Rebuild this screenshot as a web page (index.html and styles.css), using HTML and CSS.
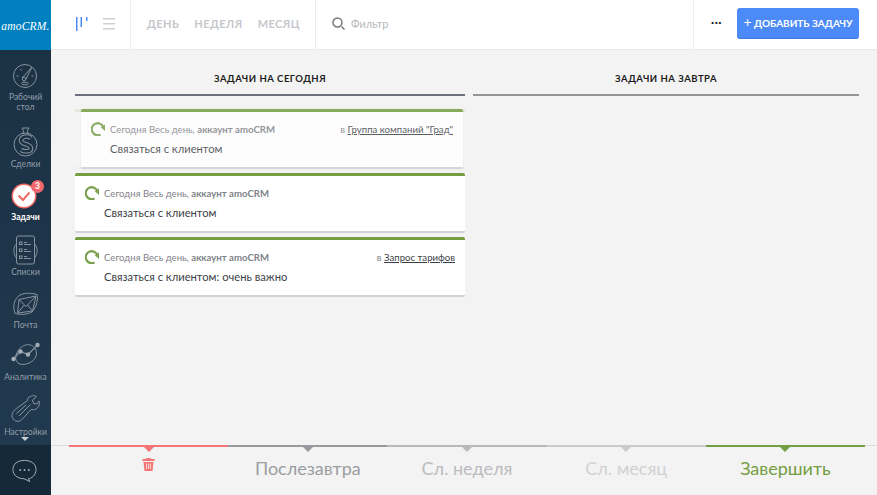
FILE: index.html
```html
<!DOCTYPE html>
<html lang="ru">
<head>
<meta charset="utf-8">
<title>Задачи</title>
<link rel="stylesheet" href="styles.css">
</head>
<body>
<div class="app">
  <aside class="sidebar">
    <div class="logo">amoCRM.</div>
    <nav class="nav">
      <a class="nav-item tight">
        <svg class="nav-icon" viewBox="0 0 30 30"><circle cx="14" cy="15" r="11.500"/><path d="M11 17 21 6 14.500 19M9.500 8l1 1.500M5.500 15h2M20.500 15h2"/><circle cx="13" cy="18" r="1.800"/><ellipse cx="14" cy="22.500" rx="3.500" ry="1.300"/></svg>
        <span>Рабочий<br>стол</span>
      </a>
      <a class="nav-item">
        <svg class="nav-icon" viewBox="0 0 30 30"><path d="M12 6.500 12.500 3.500 11 1h7l-1.500 2.500.5 3"/><circle cx="14.500" cy="17.500" r="11.500"/><path class="s-outer" d="M20 11c-3-2.500-10-1.500-10 2.500 0 4.500 10 3 10 8 0 3.500-6.500 3.500-10 1.500"/><path class="s-inner" d="M20 11c-3-2.500-10-1.500-10 2.500 0 4.500 10 3 10 8 0 3.500-6.500 3.500-10 1.500"/></svg>
        <span>Сделки</span>
      </a>
      <a class="nav-item active">
        <span class="check"><svg viewBox="0 0 22 22"><path d="M5.500 10.500 10 15l6.500-7.500"/></svg></span>
        <span class="badge">3</span>
        <span>Задачи</span>
      </a>
      <a class="nav-item">
        <svg class="nav-icon" viewBox="0 0 30 30"><rect x="5.500" y="1" width="18" height="28" rx="2"/><path d="M5.500 9C2 12 2 19 5.500 23M23.500 9c3.500 3 3.500 10 0 14M13 7.500h3M13 9.500h7M13 14.500h3M13 16.500h7M13 21.500h3M13 23.500h7"/><rect x="8.500" y="7" width="2.500" height="2.500"/><rect x="8.500" y="14" width="2.500" height="2.500"/><rect x="8.500" y="21" width="2.500" height="2.500"/></svg>
        <span>Списки</span>
      </a>
      <a class="nav-item tight">
        <svg class="nav-icon" viewBox="0 0 30 30"><path d="M4.500 25C1 18 3 10 9 6c5-2.500 12-2 17-.5 1.500 6-1 13-5 17.500-5 2.500-11 3-16.500 1.500Z"/><path d="M8 10.500 25 7 21.500 22 6.500 24ZM8 10.500l7 7L25 7M6.500 24l7-8M21.500 22l-5-6"/></svg>
        <span>Почта</span>
      </a>
      <a class="nav-item loose">
        <svg class="nav-icon" viewBox="0 0 30 30"><path d="M9 9.500C15 3 25 5 25.500 14 26 22 15 27 9 25 3 23 3.500 15 9 9.500Z"/><path class="thick" d="M2 20 9.500 12.500 17 15.500 26.500 6"/><circle class="dot" cx="2.500" cy="20" r="2.200"/><circle class="dot" cx="9.500" cy="12.500" r="2.200"/><circle class="dot" cx="17" cy="15.500" r="2.200"/><circle class="dot" cx="26.500" cy="6" r="2.200"/></svg>
        <span>Аналитика</span>
      </a>
      <a class="nav-item loose">
        <svg class="nav-icon" viewBox="0 0 30 30"><path d="M17 4c3-2.500 6-3 8.500-1.500L21.500 6l1 3.500 3.500.5 2-3c1.500 3.500-1 7.500-4 8.500-1.500.5-3 0-4 0l-9 10c-4 4-10 1-10-4 0-3 2-5 4.500-7l11-8c0-1 0-2 1-3Z"/><path d="M8 22 19.500 10.500M5.500 19.500 15 11"/></svg>
        <span>Настройки</span>
      </a>
    </nav>
    <div class="more-arrow"></div>
    <div class="chat">
      <svg viewBox="0 0 26 24"><path d="M13 1c7 0 12 3.500 12 9.500S20 20 17 20l1.500 3-6-3C6 20 1 16.500 1 10.500S6 1 13 1Z"/><circle class="fill" cx="8.500" cy="11" r="1"/><circle class="fill" cx="13" cy="11" r="1"/><circle class="fill" cx="17.500" cy="11" r="1"/></svg>
    </div>
  </aside>

  <div class="content">
    <header class="topbar">
      <div class="views">
        <svg class="view-board" viewBox="0 0 12 14"><rect x="0" y="0" width="1.500" height="14"/><rect x="4.500" y="0" width="1.500" height="10"/><rect x="10" y="0" width="1.500" height="4"/></svg>
        <svg class="view-list" viewBox="0 0 12 12"><rect y="0" width="12" height="1.500"/><rect y="5" width="12" height="1.500"/><rect y="10" width="12" height="1.500"/></svg>
      </div>
      <div class="tabs">
        <span>ДЕНЬ</span><span>НЕДЕЛЯ</span><span>МЕСЯЦ</span>
      </div>
      <div class="filter">
        <svg viewBox="0 0 13 13"><circle cx="5.500" cy="5.500" r="4.500"/><path d="m9.500 9.500 3 3"/></svg>
        <span>Фильтр</span>
      </div>
      <div class="actions">
        <span class="dots">···</span>
        <button class="add-btn"><span class="plus">+</span> ДОБАВИТЬ ЗАДАЧУ</button>
      </div>
    </header>

    <main class="board">
      <section class="column today">
        <h2>ЗАДАЧИ НА СЕГОДНЯ</h2>
        <div class="cards">
          <div class="slot">
            <article class="card ghost">
              <div class="meta"><svg class="spin" viewBox="0 0 14 14"><path d="M9.500 12.500A6 6 0 1 1 12.300 5"/><path class="tip" d="M9.800 5.200 14 2.500V9Z"/></svg></div>
            </article>
            <article class="card dragged">
              <div class="meta"><svg class="spin" viewBox="0 0 14 14"><path d="M9.500 12.500A6 6 0 1 1 12.300 5"/><path class="tip" d="M9.800 5.200 14 2.500V9Z"/></svg><span class="when">Сегодня Весь день, <b>аккаунт amoCRM</b></span><span class="rel">в <u>Группа компаний "Град"</u></span></div>
              <p class="title">Связаться с клиентом</p>
            </article>
          </div>
          <article class="card">
            <div class="meta"><svg class="spin" viewBox="0 0 14 14"><path d="M9.500 12.500A6 6 0 1 1 12.300 5"/><path class="tip" d="M9.800 5.200 14 2.500V9Z"/></svg><span class="when">Сегодня Весь день, <b>аккаунт amoCRM</b></span></div>
            <p class="title">Связаться с клиентом</p>
          </article>
          <article class="card">
            <div class="meta"><svg class="spin" viewBox="0 0 14 14"><path d="M9.500 12.500A6 6 0 1 1 12.300 5"/><path class="tip" d="M9.800 5.200 14 2.500V9Z"/></svg><span class="when">Сегодня Весь день, <b>аккаунт amoCRM</b></span><span class="rel">в <u>Запрос тарифов</u></span></div>
            <p class="title">Связаться с клиентом: очень важно</p>
          </article>
        </div>
      </section>
      <section class="column tomorrow">
        <h2>ЗАДАЧИ НА ЗАВТРА</h2>
      </section>
    </main>

    <footer class="dropbar">
      <div class="drop red"><svg viewBox="0 0 12 13"><path d="M4 0h4l.5 1H12v2H0V1h3.500ZM1 4h10l-1 9H2Z"/><path class="gap" d="M4 5.500v5.500M6 5.500v5.500M8 5.500v5.500"/></svg></div>
      <div class="drop d1">Послезавтра</div>
      <div class="drop d2">Сл. неделя</div>
      <div class="drop d3">Сл. месяц</div>
      <div class="drop green">Завершить</div>
    </footer>
  </div>
</div>
</body>
</html>
```

FILE: styles.css
```css
* { box-sizing: border-box; }
html, body { margin: 0; height: 100%; }
body { font-family: "Lato", "Roboto", sans-serif; background: #f3f3f3; overflow: hidden; }
.app { display: flex; width: 877px; height: 495px; }

/* sidebar */
.sidebar { width: 51px; flex: none; display: flex; flex-direction: column; background: #1b3144; color: #929ea8; position: relative; }
.logo { height: 50px; background: #0080bf; color: #fff; display: flex; align-items: center; justify-content: center; padding-top: 1px; font: italic 11.500px "Liberation Serif", serif; letter-spacing: .2px; white-space: nowrap; }
.nav { height: 395px; padding-top: 11px; display: grid; grid-template-rows: 66px 54px 54px 54px 50px 55px 50px; background: linear-gradient(#1b3144, #21394e); }
.nav-item { position: relative; display: flex; flex-direction: column; align-items: center; font-size: 8.500px; line-height: 10px; text-align: center; white-space: nowrap; }
.nav-item > span { display: block; }
.nav-icon { width: 30px; height: 30px; flex: none; fill: none; stroke: #87949f; stroke-width: 1; margin-bottom: 2px; }
.tight .nav-icon { margin-bottom: 1px; }
.loose .nav-icon { margin-bottom: 3px; }
.nav-icon .thick { stroke-width: 1.300; }
.nav-icon .dot { fill: #a4aeb6; stroke: none; }
.nav-icon .s-outer { stroke-width: 4.500; }
.nav-icon .s-inner { stroke: #1b3144; stroke-width: 2.500; }
.nav-item.active { color: #fff; font-weight: 700; }
.check { width: 22px; height: 22px; margin: 4px 3px 5px 0; border-radius: 50%; background: #fff; box-shadow: 0 0 0 1.500px #ef6a62; }
.check svg { display: block; width: 22px; height: 22px; fill: none; stroke: #ef6a62; stroke-width: 2; }
.badge { position: absolute; top: -1px; left: 31px; width: 13px; height: 13px; border-radius: 50%; background: #f3686c; color: #fff; font-size: 8.500px; line-height: 13px; }
.more-arrow { position: absolute; left: 21px; top: 437px; border: 4px solid transparent; border-top-color: #c9ced3; border-bottom: 0; }
.chat { flex: 1; background: #152938; display: flex; justify-content: center; padding: 14px 2px 0 0; }
.chat svg { width: 25px; height: 24px; fill: none; stroke: #a8b1b9; stroke-width: 1; }
.chat .fill { fill: #a8b1b9; stroke: none; }

/* content */
.content { flex: 1; min-width: 0; display: flex; flex-direction: column; }
.topbar { height: 50px; flex: none; background: #fff; border-bottom: 1px solid #e9e9e9; display: flex; }
.views { width: 80px; border-right: 1px solid #ededed; display: flex; align-items: center; padding: 0 0 1px 25px; gap: 15px; }
.view-board { width: 12px; height: 14px; fill: #4c8bf7; }
.view-list { width: 12px; height: 12px; fill: #cfcfcf; }
.tabs { width: 185px; border-right: 1px solid #ededed; display: flex; align-items: center; gap: 15px; padding: 0 0 2px 16px; font-size: 11px; font-weight: 700; letter-spacing: .45px; color: #c5c8cd; }
.filter { flex: 1; display: flex; align-items: center; gap: 6px; padding: 0 0 2px 16px; font-size: 11px; color: #b9b9b9; }
.filter svg { width: 13px; height: 13px; fill: none; stroke: #777; stroke-width: 1.500; }
.actions { width: 184px; border-left: 1px solid #ededed; display: flex; align-items: center; padding: 0 0 3px 16px; gap: 15px; }
.dots { width: 12px; font: 700 14px/12px "Roboto", sans-serif; color: #222; text-align: center; letter-spacing: -.5px; }
.add-btn { width: 122px; height: 31px; border: 0; border-bottom: 1px solid #3f78dc; border-radius: 3px; padding: 0; background: #4c8bf7; color: #fff; font: 700 10px "Lato", sans-serif; white-space: nowrap; }
.plus { font-size: 14px; font-weight: 400; line-height: 10px; }

/* board */
.board { flex: 1; min-height: 0; display: flex; padding: 0 18px 0 24px; gap: 8px; }
.column { flex: none; }
.today { width: 390px; }
.tomorrow { width: 386px; }
.column h2 { margin: 0; height: 46px; padding-top: 22px; font-size: 9.500px; line-height: 14px; font-weight: 700; letter-spacing: .5px; text-align: center; color: #1c1c1c; border-bottom: 2px solid #6d707e; }
.tomorrow h2 { border-bottom-color: #939598; }
.cards { padding-top: 13px; display: flex; flex-direction: column; gap: 4px; }
.slot { position: relative; height: 60px; }
.card { height: 60px; background: #fff; border-top: 3px solid #749e42; border-bottom: 2px solid #cfd1d6; border-radius: 2px; padding: 10px 10px 0 10px; }
.card.ghost { opacity: .12; }
.card.dragged { position: absolute; left: 6px; top: 0; width: 382px; opacity: .82; box-shadow: 0 0 2px rgba(0,0,0,.08); }
.meta { display: flex; align-items: center; height: 14px; font-size: 9.600px; color: #7f8389; white-space: nowrap; }
.spin { width: 14px; height: 14px; margin-right: 5px; flex: none; fill: none; stroke: #7a9f4d; stroke-width: 2.200; }
.spin .tip { fill: #7a9f4d; stroke: none; }
.when b { font-weight: 700; }
.rel { margin-left: auto; }
.rel u { color: #3c3f46; text-underline-offset: 1px; }
.title { margin: 5px 0 0 19px; font-size: 11.200px; line-height: 16px; color: #3c3f46; }

/* drop bar */
.dropbar { height: 50px; flex: none; display: flex; padding: 0 12px 0 18px; background: linear-gradient(#dcdcdc 1px, transparent 1px) 0 -.5px no-repeat; }
.drop { position: relative; flex: 1; height: 50px; border-top: 2px solid; padding-top: 10px; text-align: center; font-size: 18px; line-height: 22px; }
.drop::after { content: ""; position: absolute; left: 50%; top: 0; margin-left: -5px; border: 5px solid transparent; border-top-color: inherit; border-bottom: 0; }
.drop.red { border-color: #f37575; padding-top: 11px; }
.drop.red svg { display: block; margin: 0 auto; width: 13px; height: 13px; fill: #f37575; }
.drop.red .gap { stroke: #f3f3f3; fill: none; stroke-width: .8; }
.d1 { border-color: #97999e; color: #9a9da1; }
.d2 { border-color: #b7b9bc; color: #babcbf; }
.d3 { border-color: #c8cacd; color: #d0d1d3; }
.drop.green { border-color: #749e42; color: #749e42; }
```
